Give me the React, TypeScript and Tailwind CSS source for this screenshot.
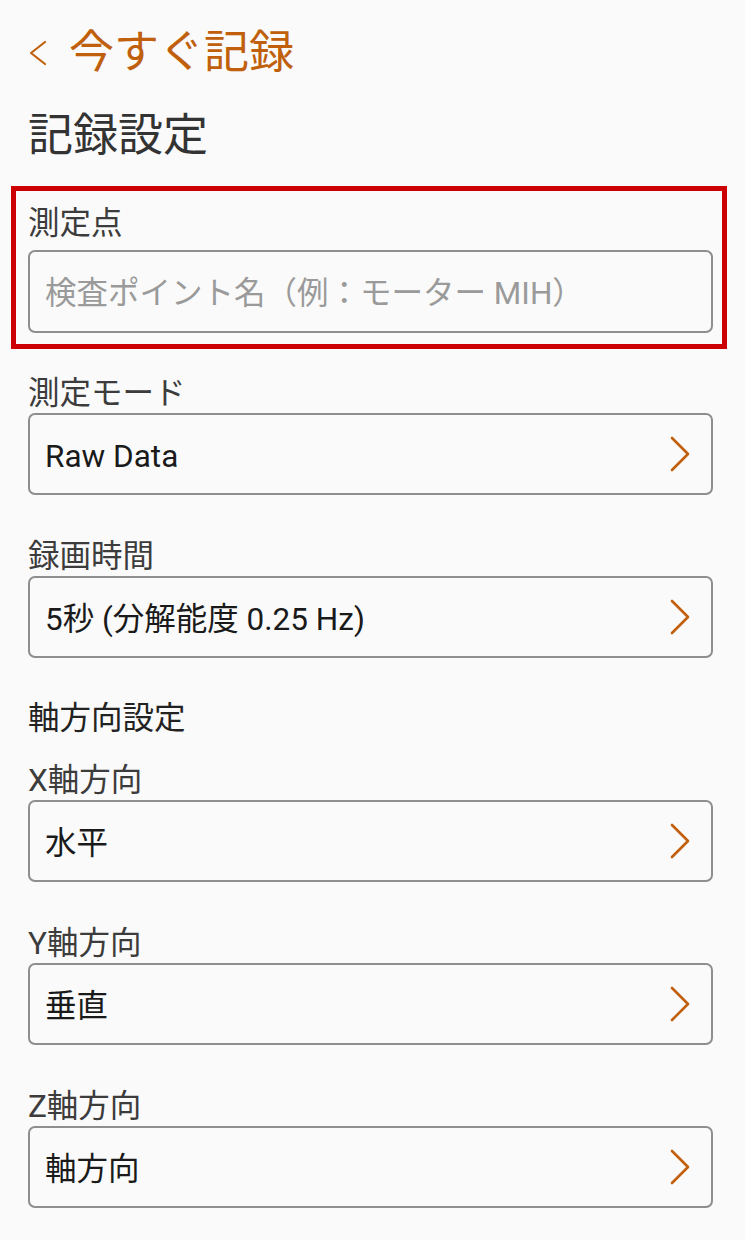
const fields = [
  { label: "測定モード", value: "Raw Data" },
  { label: "録画時間", value: "5秒 (分解能度 0.25 Hz)" },
]

const axes = [
  { label: "X軸方向", value: "水平" },
  { label: "Y軸方向", value: "垂直" },
  { label: "Z軸方向", value: "軸方向" },
]

function Chevron() {
  return (
    <svg width="21" height="36" viewBox="0 0 21 36" fill="none" className="mr-[20px]">
      <polyline points="2,2 18,18 2,34" stroke="#c0600c" strokeWidth="2.6" strokeLinecap="round" strokeLinejoin="round" />
    </svg>
  )
}

function SelectRow({ value }: { value: string }) {
  return (
    <button className="mx-[28px] flex h-[82px] w-[685px] items-center justify-between rounded-[7px] border-2 border-[#8e8e8e] bg-[#fafafa] pl-[15px] text-left">
      <span className="pt-[5px] text-[31.5px] leading-none text-[#1a1a1a]">{value}</span>
      <Chevron />
    </button>
  )
}

function Field({ label, value, top }: { label: string; value: string; top: string }) {
  return (
    <div className={top}>
      <div className="px-[28px] text-[31.5px] leading-[34px] text-[#3c3c3c]">{label}</div>
      <div className="mt-[2px]">
        <SelectRow value={value} />
      </div>
    </div>
  )
}

export default function App() {
  return (
    <div className="min-h-[1240px] w-[750px] border-r-[5px] border-white bg-[#fafafa] pb-[32px] font-['Roboto','Noto_Sans_CJK_JP',sans-serif]">
      <div className="flex items-center pt-[31px]">
        <svg width="20" height="26" viewBox="0 0 20 26" fill="none" className="ml-[28px]">
          <polyline points="17,2 3,13 17,24" stroke="#c0600c" strokeWidth="2.2" strokeLinecap="round" strokeLinejoin="round" />
        </svg>
        <h1 className="ml-[21px] text-[45px] leading-[44px] text-[#c0600c]">今すぐ記録</h1>
      </div>

      <h2 className="mt-[38px] px-[28px] text-[45px] leading-[45px] text-[#333]">記録設定</h2>

      <div className="mx-[11px] mt-[28px] w-[716px] border-[5px] border-[#cc0000] pt-[16px] pb-[11px] pl-[12px] pr-[9px]">
        <div className="text-[31.5px] leading-[34px] text-[#3c3c3c]">測定点</div>
        <input
          type="text"
          placeholder="検査ポイント名（例：モーター MIH）"
          className="mt-[9px] h-[83px] w-[685px] rounded-[7px] border-2 border-[#8e8e8e] bg-[#fafafa] pl-[15px] pt-[3px] text-[31.5px] text-[#1a1a1a] outline-none placeholder:text-[#9a9a9a]"
        />
      </div>

      {fields.map((f, i) => (
        <Field key={f.label} label={f.label} value={f.value} top={i === 0 ? "mt-[28px]" : "mt-[45px]"} />
      ))}

      <div className="mt-[44px] px-[28px] text-[31.5px] leading-[34px] text-[#222]">軸方向設定</div>

      {axes.map((a, i) => (
        <Field key={a.label} label={a.label} value={a.value} top={i === 0 ? "mt-[28px]" : "mt-[45px]"} />
      ))}
    </div>
  )
}
